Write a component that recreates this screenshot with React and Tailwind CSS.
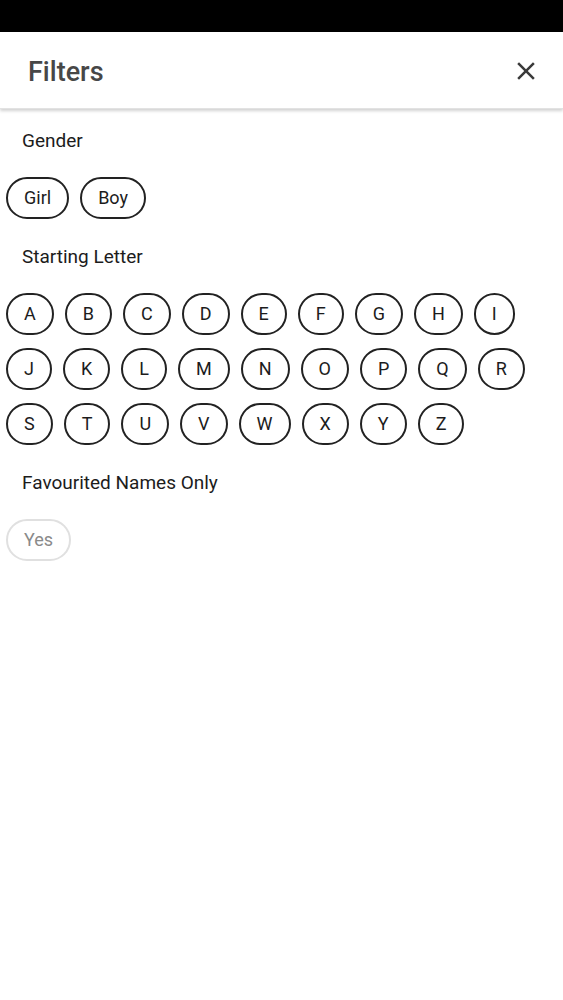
import React, { useState } from 'react';

const LETTERS = 'ABCDEFGHIJKLMNOPQRSTUVWXYZ'.split('');

const Chip = ({ label, muted, onClick }) => (
    <button
        onClick={onClick}
        className={`h-[42px] px-[16px] flex items-center justify-center rounded-full border-2 bg-white text-[18px] leading-none ${muted ? 'border-[#e0e0e0] text-[#8a8a8a]' : 'border-[#222] text-[#1c1c1c]'}`}
    >
        {label}
    </button>
);

const SectionLabel = ({ children, first }) => (
    <div className={`px-[22px] text-[19px] leading-[24px] text-[#1c1c1c] ${first ? 'pt-[20px]' : 'pt-[26px]'} pb-[24px]`}>
        {children}
    </div>
);

const App = () => {
    const [gender, setGender] = useState(null);
    const [letter, setLetter] = useState(null);

    return (
        <div className="w-[563px] min-h-[1000px] bg-white" style={{ fontFamily: 'Roboto, "Noto Sans", sans-serif' }}>
            {/* status bar */}
            <div className="h-[32px] bg-black"></div>

            {/* header */}
            <div className="h-[77px] flex items-center justify-between pl-[28px] pr-[22px] bg-white shadow-[0_2px_3px_rgba(0,0,0,0.18)] border-b border-[#e2e2e2]">
                <h1 className="text-[27px] leading-none pt-[4px] font-medium text-[#474747]">Filters</h1>
                <button className="text-[#3a3a3a] pt-[2px]">
                    <svg width="30" height="30" viewBox="0 0 24 24" fill="currentColor">
                        <path d="M19 6.41 17.59 5 12 10.59 6.41 5 5 6.41 10.59 12 5 17.59 6.41 19 12 13.41 17.59 19 19 17.59 13.41 12z" />
                    </svg>
                </button>
            </div>

            <SectionLabel first>Gender</SectionLabel>
            <div className="flex gap-[11px] px-[6px]">
                {['Girl', 'Boy'].map((g) => (
                    <Chip key={g} label={g} onClick={() => setGender(g)} />
                ))}
            </div>

            <SectionLabel>Starting Letter</SectionLabel>
            <div className="flex flex-wrap gap-x-[11px] gap-y-[13px] px-[6px]">
                {LETTERS.map((l) => (
                    <Chip key={l} label={l} onClick={() => setLetter(l)} />
                ))}
            </div>

            <SectionLabel>Favourited Names Only</SectionLabel>
            <div className="flex px-[6px]">
                <Chip label="Yes" muted />
            </div>
        </div>
    );
};

export default App;
